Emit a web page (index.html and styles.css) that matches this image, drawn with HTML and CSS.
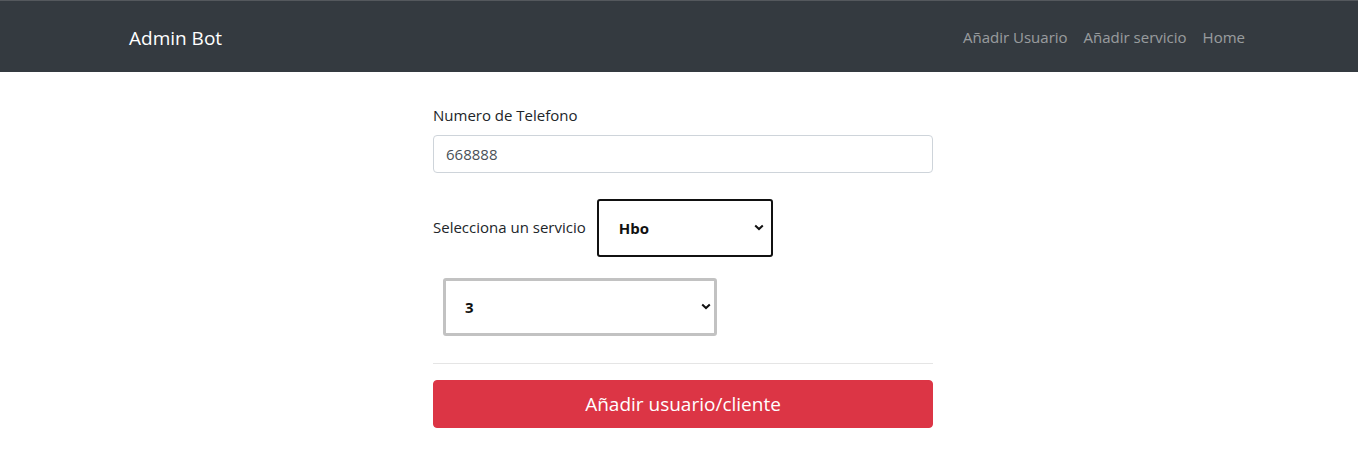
FILE: index.html
```html
<!DOCTYPE html>
<html lang="es">
<head>
<meta charset="utf-8">
<title>Admin Bot</title>
<link rel="stylesheet" href="styles.css">
</head>
<body>
<nav class="navbar">
  <div class="nav-inner">
    <a class="brand" href="#">Admin Bot</a>
    <ul class="nav-links">
      <li><a href="#">Añadir Usuario</a></li>
      <li><a href="#">Añadir servicio</a></li>
      <li><a href="#">Home</a></li>
    </ul>
  </div>
</nav>
<main class="form-col">
  <div class="group">
    <label class="label" for="tel">Numero de Telefono</label>
    <input id="tel" class="input" type="text" value="668888">
  </div>
  <div class="service-row">
    <label class="inline-label" for="srv">Selecciona un servicio</label>
    <select id="srv" class="select select-dark"><option>Hbo</option></select>
  </div>
  <div class="qty-row">
    <select class="select select-gray"><option>3</option></select>
  </div>
  <hr class="divider">
  <button class="btn-danger" type="button">Añadir usuario/cliente</button>
</main>
</body>
</html>
```
FILE: styles.css
```css
* { box-sizing: border-box; }
html, body { margin: 0; padding: 0; }
body {
  font-family: "Open Sans", "Noto Sans", sans-serif;
  font-size: 16px;
  line-height: 1.5;
  color: #212529;
  background: #fff;
}
.navbar {
  background: #343a40;
  border-top: 1px solid #54585d;
  height: 72px;
}
.nav-inner {
  height: 71px;
  display: flex;
  align-items: center;
  justify-content: space-between;
  padding: 2px 105px 0 129px;
}
.brand {
  color: #fff;
  text-decoration: none;
  font-size: 19px;
  line-height: 30px;
}
.nav-links {
  list-style: none;
  margin: 0;
  padding: 0;
  display: flex;
}
.nav-links a {
  display: block;
  color: rgba(255,255,255,0.5);
  text-decoration: none;
  font-size: 15px;
  padding: 8px 8px;
}
.form-col {
  width: 500px;
  margin: 32px 0 0 calc(50% - 246px);
}
.label {
  display: block;
  font-size: 15px;
  margin-bottom: 8px;
}
.input {
  display: block;
  width: 100%;
  height: 38px;
  padding: 6px 12px;
  font-family: inherit;
  font-size: 15px;
  color: #495057;
  border: 1px solid #ced4da;
  border-radius: 4px;
  background: #fff;
}
.service-row {
  display: flex;
  align-items: center;
  margin-top: 26px;
}
.inline-label {
  font-size: 15px;
  margin-right: 11px;
}
.select {
  -webkit-appearance: none;
  appearance: none;
  height: 58px;
  font-family: inherit;
  font-size: 15px;
  font-weight: 700;
  color: #111;
  background-color: #fff;
  background-image: url("data:image/svg+xml,%3Csvg xmlns='http://www.w3.org/2000/svg' width='10' height='7' viewBox='0 0 10 7'%3E%3Cpath d='M1.2 1.4 L5 5 L8.8 1.4' fill='none' stroke='%23111' stroke-width='2'/%3E%3C/svg%3E");
  background-repeat: no-repeat;
  border-radius: 3px;
}
.select-dark {
  width: 176px;
  border: 2px solid #111;
  padding: 0 0 0 20px;
  background-position: right 7px center;
}
.qty-row {
  padding-left: 10px;
  margin-top: 21px;
}
.select-gray {
  width: 274px;
  border: 3px solid #c2c2c2;
  padding: 0 0 0 19px;
  background-position: right 3px center;
}
.divider {
  border: 0;
  border-top: 1px solid rgba(0,0,0,0.1);
  margin: 27px 0 16px;
}
.btn-danger {
  display: block;
  width: 100%;
  height: 48px;
  background: #dc3545;
  color: #fff;
  border: 1px solid #dc3545;
  border-radius: 4px;
  font-family: inherit;
  font-size: 19px;
  cursor: pointer;
}
```
